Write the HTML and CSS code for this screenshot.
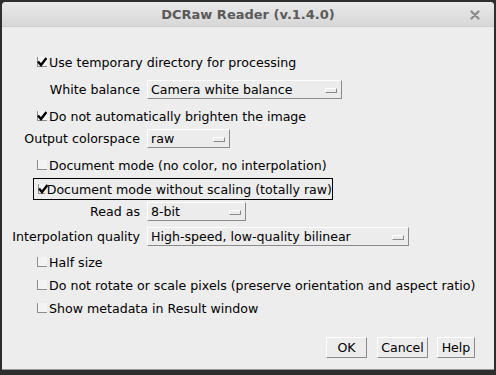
FILE: index.html
```html
<!DOCTYPE html>
<html lang="en">
<head>
  <meta charset="UTF-8" />
  <title>DCRaw Reader</title>
  <link rel="stylesheet" href="styles.css">
</head>
<body>
  <div class="window">
    <div class="titlebar">
      <span class="title">DCRaw Reader (v.1.4.0)</span>
      <svg class="close" width="10" height="10" viewBox="0 0 10 10">
        <path d="M1.5 1.5 L8.5 8.5 M8.5 1.5 L1.5 8.5" stroke="#8a8a8a" stroke-width="2.2" stroke-linecap="round"/>
      </svg>
    </div>

    <div class="content">
      <div class="check-row" style="margin-top:24px"><span class="box checked"><svg viewBox="0 0 10 10"><path d="M1 4.5 L4 8 L9.5 1"/></svg></span>Use temporary directory for processing</div>

      <div class="field-row" style="margin-top:6px">
        <span class="label">White balance</span>
        <span class="choice w-wb">Camera white balance<i class="knob"></i></span>
      </div>

      <div class="check-row" style="margin-top:6px"><span class="box checked"><svg viewBox="0 0 10 10"><path d="M1 4.5 L4 8 L9.5 1"/></svg></span>Do not automatically brighten the image</div>

      <div class="field-row" style="margin-top:1px">
        <span class="label">Output colorspace</span>
        <span class="choice w-raw">raw<i class="knob"></i></span>
      </div>

      <div class="check-row" style="margin-top:6px"><span class="box"></span>Document mode (no color, no interpolation)</div>

      <div class="check-row focus" style="margin-top:2px"><span class="box checked"><svg viewBox="0 0 10 10"><path d="M1 4.5 L4 8 L9.5 1"/></svg></span>Document mode without scaling (totally raw)</div>

      <div class="field-row" style="margin-top:1px">
        <span class="label">Read as</span>
        <span class="choice w-bit">8-bit<i class="knob"></i></span>
      </div>

      <div class="field-row" style="margin-top:5px">
        <span class="label">Interpolation quality</span>
        <span class="choice w-interp">High-speed, low-quality bilinear<i class="knob"></i></span>
      </div>

      <div class="check-row" style="margin-top:5px"><span class="box"></span>Half size</div>
      <div class="check-row" style="margin-top:1px"><span class="box"></span>Do not rotate or scale pixels (preserve orientation and aspect ratio)</div>
      <div class="check-row" style="margin-top:1px"><span class="box"></span>Show metadata in Result window</div>
    </div>

    <div class="buttons">
      <button class="ok">OK</button>
      <button class="cancel">Cancel</button>
      <button class="help">Help</button>
    </div>
  </div>
</body>
</html>
```

FILE: styles.css
```css
body {
  margin: 0;
  background: #2e2e2e;
  font-family: 'DejaVu Sans', sans-serif;
  font-size: 12.6px;
  color: #000;
  width: 496px;
  height: 375px;
  overflow: hidden;
}
.window {
  margin: 2px 0 0 2px;
  width: 492px;
  height: 368px;
  background: #ededed;
  border-radius: 4px 4px 0 0;
  box-sizing: border-box;
  border-bottom: 1px solid #9a9a9a;
  position: relative;
}
.titlebar {
  height: 24px;
  background: linear-gradient(#e9e9e9, #d7d7d7);
  border-bottom: 1px solid #cfcfcf;
  border-radius: 4px 4px 0 0;
  display: flex;
  align-items: center;
  justify-content: center;
  position: relative;
}
.title {
  font-weight: bold;
  font-size: 13px;
  color: #5a5a5a;
}
.close {
  position: absolute;
  right: 14px;
  top: 8px;
}
.content {
  display: flex;
  flex-direction: column;
}
.check-row {
  height: 22px;
  display: flex;
  align-items: center;
  padding-left: 35px;
  white-space: nowrap;
}
.check-row.focus {
  margin-left: 31px;
  padding-left: 3px;
  width: 300px;
  box-sizing: border-box;
  border: 1px solid #000;
}
.box {
  width: 10px;
  height: 10px;
  margin-right: 2px;
  background: #f4f4f4;
  border-left: 1px solid #8c8c8c;
  border-bottom: 1px solid #8c8c8c;
  box-sizing: border-box;
  position: relative;
}
.box svg {
  position: absolute;
  left: -1px;
  top: 0;
  width: 10px;
  height: 10px;
  fill: none;
  stroke: #000;
  stroke-width: 2.4;
}
.check-row.focus .box {
  margin-left: 1px;
}
.field-row {
  display: flex;
  align-items: center;
  height: 20px;
}
.label {
  width: 138px;
  text-align: right;
  margin-right: 7px;
  white-space: nowrap;
}
.choice {
  height: 19px;
  box-sizing: border-box;
  border-top: 1px solid #fff;
  border-left: 1px solid #fff;
  border-right: 1px solid #8a8a8a;
  border-bottom: 1px solid #8a8a8a;
  background: #ececec;
  display: flex;
  align-items: center;
  padding-left: 3px;
  position: relative;
  white-space: nowrap;
}
.knob {
  position: absolute;
  right: 4px;
  top: 7px;
  width: 12px;
  height: 5px;
  box-sizing: border-box;
  border-top: 1px solid #fff;
  border-left: 1px solid #fff;
  border-right: 1px solid #8a8a8a;
  border-bottom: 1px solid #8a8a8a;
}
.w-wb { width: 195px; }
.w-raw { width: 83px; }
.w-bit { width: 99px; }
.w-interp { width: 262px; }
.buttons {
  position: absolute;
  left: 324px;
  top: 335px;
  display: flex;
  gap: 10px;
}
button {
  font-family: 'DejaVu Sans', sans-serif;
  font-size: 12.6px;
  color: #000;
  background: #ececec;
  height: 21px;
  padding: 0;
  border-top: 1px solid #fff;
  border-left: 1px solid #fff;
  border-right: 1px solid #8a8a8a;
  border-bottom: 1px solid #8a8a8a;
  border-radius: 0;
}
button.ok { width: 41px; }
button.cancel { width: 51px; }
button.help { width: 38px; margin-left: -1px; }
```
